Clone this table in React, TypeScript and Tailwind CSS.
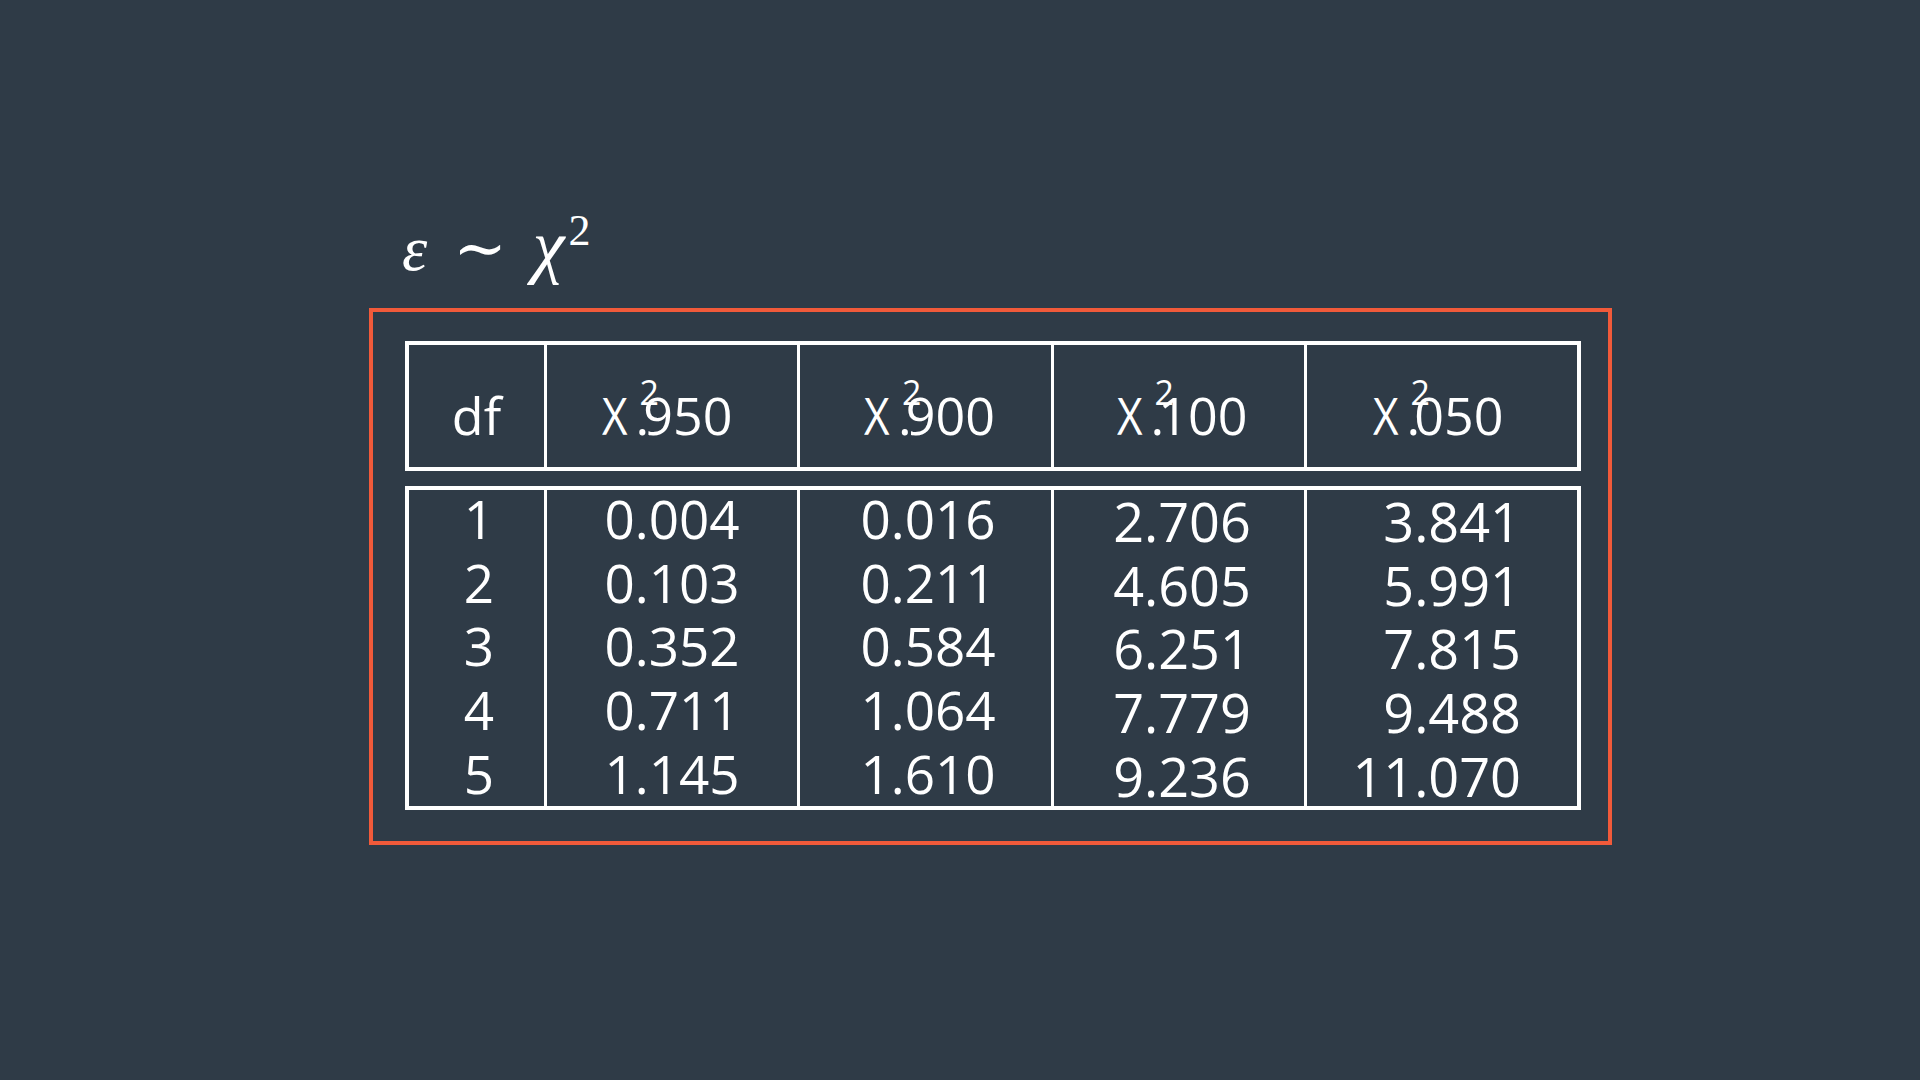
import React from "react";

const rows: string[][] = [
  ["1", "0.004", "0.016", "2.706", "3.841"],
  ["2", "0.103", "0.211", "4.605", "5.991"],
  ["3", "0.352", "0.584", "6.251", "7.815"],
  ["4", "0.711", "1.064", "7.779", "9.488"],
  ["5", "1.145", "1.610", "9.236", "11.070"],
];

const heads = ["950", "900", "100", "050"];
const headShift = ["", "pr-[10px]", "pl-[8px]", "pl-[6px]", "pr-[8px]"];
const bodyShift = ["pl-[5px]", "", "pl-[5px]", "pl-[6px]", ""];

function ChiHead({ sub }: { sub: string }) {
  return (
    <span className="whitespace-nowrap">
      <span className="inline-block scale-x-[0.85] origin-left -mr-[4px]">Χ</span>
      <span className="relative ml-[8px]">
        <span className="-mr-[6px]">.</span>
        <span>{sub}</span>
        <span className="absolute left-[4px] -top-[4px] text-[34px] leading-[34px]">2</span>
      </span>
    </span>
  );
}

export default function App() {
  const cols = [0, 1, 2, 3, 4];
  return (
    <div className="w-[1920px] h-[1080px] bg-[#2f3b47] pt-[208px] pl-[369px] text-white font-['Open_Sans',sans-serif]">
      <div className="h-[80px] leading-[80px] text-[64px] pl-[33px] whitespace-nowrap font-['Liberation_Serif','DejaVu_Serif',serif]">
        <span className="italic">ε</span>
        <span className="ml-[26px] font-['DejaVu_Serif',serif]">∼</span>
        <span className="italic ml-[26px] text-[72px] leading-none">χ</span>
        <span className="relative -top-[25px] ml-[4px] text-[44px] leading-none">2</span>
      </div>
      <div className="mt-[20px] w-[1243px] h-[537px] border-4 border-[#f15a3a] pt-[29px] pl-[32px] pr-[27px]">
        <div className="w-[1176px] h-[130px] border-4 border-white grid grid-cols-[135px_253px_254px_253px_1fr]">
          {cols.map((c) => (
            <div
              key={c}
              className={
                "flex justify-center pt-[38px] text-[52px] leading-[64px] border-white " +
                (c > 0 ? "border-l-[3px] " : "") +
                headShift[c]
              }
            >
              {c === 0 ? <span>df</span> : <ChiHead sub={heads[c - 1]} />}
            </div>
          ))}
        </div>
        <div className="mt-[15px] w-[1176px] h-[324px] border-4 border-white grid grid-cols-[135px_253px_254px_253px_1fr]">
          {cols.map((c) => (
            <div
              key={c}
              className={
                "flex flex-col border-white " +
                (c > 0 ? "border-l-[3px] " : "") +
                (c === 4 ? "items-end pr-[56px] " : "items-center ") +
                bodyShift[c]
              }
            >
              <div
                className={
                  "flex flex-col leading-[63.7px] " +
                  (c >= 3 ? "text-[54px] items-end" : "text-[53px] -mt-[3px] items-center")
                }
              >
                {rows.map((r, i) => (
                  <div key={i}>{r[c]}</div>
                ))}
              </div>
            </div>
          ))}
        </div>
      </div>
    </div>
  );
}
